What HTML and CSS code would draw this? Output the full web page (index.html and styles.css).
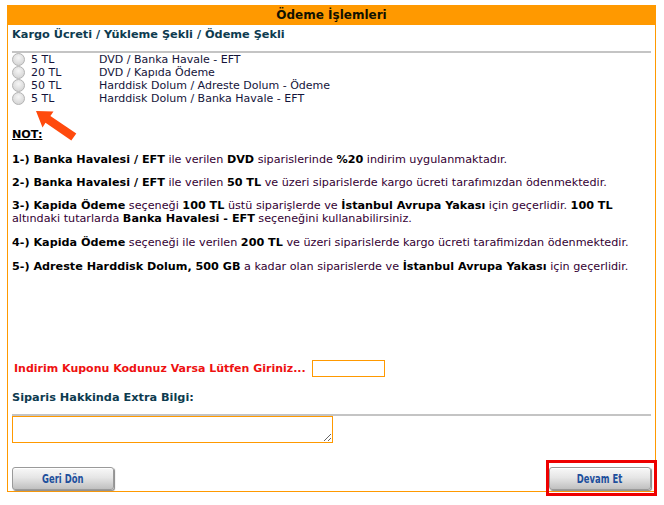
FILE: index.html
```html
<html>
<head>
  <title>Ödeme İşlemleri</title>
  <link rel="stylesheet" href="styles.css">
</head>
<body>
  <div class="box">
    <div class="box-title">Ödeme İşlemleri</div>
    <div class="box-body">
      <div class="label">Kargo Ücreti / Yükleme Şekli / Ödeme Şekli</div>
      <hr class="sep">
      <table class="options">
        <tr><td><span class="radio"></span></td><td class="price">5 TL</td><td>DVD / Banka Havale - EFT</td></tr>
        <tr><td><span class="radio"></span></td><td class="price">20 TL</td><td>DVD / Kapıda Ödeme</td></tr>
        <tr><td><span class="radio"></span></td><td class="price">50 TL</td><td>Harddisk Dolum / Adreste Dolum - Ödeme</td></tr>
        <tr><td><span class="radio"></span></td><td class="price">5 TL</td><td>Harddisk Dolum / Banka Havale - EFT</td></tr>
      </table>

      <svg class="arrow" width="42" height="31" viewBox="0 0 42 31">
        <polygon points="0,0 17.5,0.4 14.4,4.9 40.3,22.6 35.3,29.6 9.5,11.8 6.5,16.4" fill="#ff4a0d"/>
      </svg>

      <div class="not">NOT:</div>

      <p class="note first"><b>1-) Banka Havalesi / EFT</b> ile verilen <b>DVD</b> siparislerinde <b>%20</b> indirim uygulanmaktadır.</p>
      <p class="note"><b>2-) Banka Havalesi / EFT</b> ile verilen <b>50 TL</b> ve üzeri siparislerde kargo ücreti tarafımızdan ödenmektedir.</p>
      <p class="note"><b>3-) Kapida Ödeme</b> seçeneği <b>100 TL</b> üstü siparişlerde ve <b>İstanbul Avrupa Yakası</b> için geçerlidir. <b>100 TL</b><br>altındaki tutarlarda <b>Banka Havalesi - EFT</b> seçeneğini kullanabilirsiniz.</p>
      <p class="note wide"><b>4-) Kapida Ödeme</b> seçeneği ile verilen <b>200 TL</b> ve üzeri siparislerde kargo ücreti tarafimizdan ödenmektedir.</p>
      <p class="note wide"><b>5-) Adreste Harddisk Dolum, 500 GB</b> a kadar olan siparislerde ve <b>İstanbul Avrupa Yakası</b> için geçerlidir.</p>

      <div class="coupon">
        <span class="coupon-label">Indirim Kuponu Kodunuz Varsa Lütfen Giriniz...</span>
        <input type="text" class="coupon-input">
      </div>

      <div class="label extra">Siparis Hakkinda Extra Bilgi:</div>
      <hr class="sep sep2">
      <textarea class="extra-text"></textarea>

      <div class="actions">
        <button class="img-btn"><span>Geri Dön</span></button>
        <div class="highlight">
          <button class="img-btn"><span>Devam Et</span></button>
        </div>
      </div>
    </div>
  </div>
</body>
</html>
```

FILE: styles.css
```css
body {
  margin: 0;
  background: #ffffff;
  font-family: 'DejaVu Sans', Verdana, sans-serif;
  font-size: 11.2px;
  color: #330033;
}

.box {
  position: relative;
  margin: 5px 0 0 7px;
  width: 649px;
  height: 487px;
  border: 1px solid #ff9900;
  border-top: none;
  box-sizing: border-box;
}

.box-title {
  background: #ff9900;
  height: 20px;
  line-height: 20px;
  text-align: center;
  font-weight: bold;
  font-size: 12px;
  color: #111100;
}

.box-body {
  padding: 0 4px;
}

.label {
  font-weight: bold;
  font-size: 11.3px;
  color: #0d3b4f;
  margin: 2px 0 0 0;
  line-height: 15px;
}

.sep {
  border: none;
  border-top: 2px solid #c4c4c4;
  margin: 9px 0 0 0;
}

.options {
  border-collapse: collapse;
  font-family: 'DejaVu Sans', Verdana, sans-serif;
  font-size: 11px;
}

.options td {
  padding: 0;
  height: 13px;
  line-height: 13px;
  vertical-align: middle;
  color: #14143a;
}

.options .price {
  width: 68px;
  padding-left: 6px;
}

.radio {
  display: block;
  width: 13px;
  height: 13px;
  border-radius: 50%;
  border: 1px solid #b4b4b4;
  background: radial-gradient(circle at 50% 35%, #f6f6f6, #cdcdcd);
  box-sizing: border-box;
}

.arrow {
  position: absolute;
  left: 28px;
  top: 106px;
}

.not {
  font-weight: bold;
  text-decoration: underline;
  color: #000000;
  margin-top: 23px;
  line-height: 13px;
}

.note {
  margin: 10px 0 0 0;
  line-height: 13px;
}

.note.first {
  margin-top: 12px;
}

.note.wide {
  margin-top: 11px;
}

.note b {
  color: #000000;
}

.coupon {
  display: flex;
  align-items: center;
  margin-top: 87px;
  padding-left: 2px;
}

.coupon-label {
  color: #ee1111;
  font-weight: bold;
  font-size: 11px;
  margin-right: 6px;
}

.coupon-input {
  width: 73px;
  height: 17px;
  border: 1px solid #ff9900;
  padding: 0;
  box-sizing: border-box;
}

.extra {
  margin-top: 13px;
}

.sep2 {
  margin-top: 9px;
}

.extra-text {
  display: block;
  width: 321px;
  height: 27px;
  border: 1px solid #ff9900;
  margin: 0;
  resize: both;
  box-sizing: border-box;
}

.actions {
  display: flex;
  justify-content: space-between;
  align-items: center;
  margin-top: 24px;
}

.img-btn {
  width: 102px;
  height: 23px;
  border: 1px solid #9a9a9a;
  border-radius: 3px;
  background: linear-gradient(#f8f8f8, #e6e6e6 45%, #c0c0c0);
  box-shadow: inset 0 1px 0 #ffffff, 1px 1px 1px #888888;
  padding: 0;
}

.img-btn span {
  display: inline-block;
  font-family: 'DejaVu Sans Condensed', 'DejaVu Sans', sans-serif;
  font-weight: bold;
  font-size: 13px;
  color: #1d4f9c;
  transform: scaleX(0.72);
}

.highlight {
  border: 3px solid #ee0000;
  padding: 4px 3px 3px 0;
  margin-right: -6px;
  margin-top: -7px;
  margin-bottom: -6px;
}
```
